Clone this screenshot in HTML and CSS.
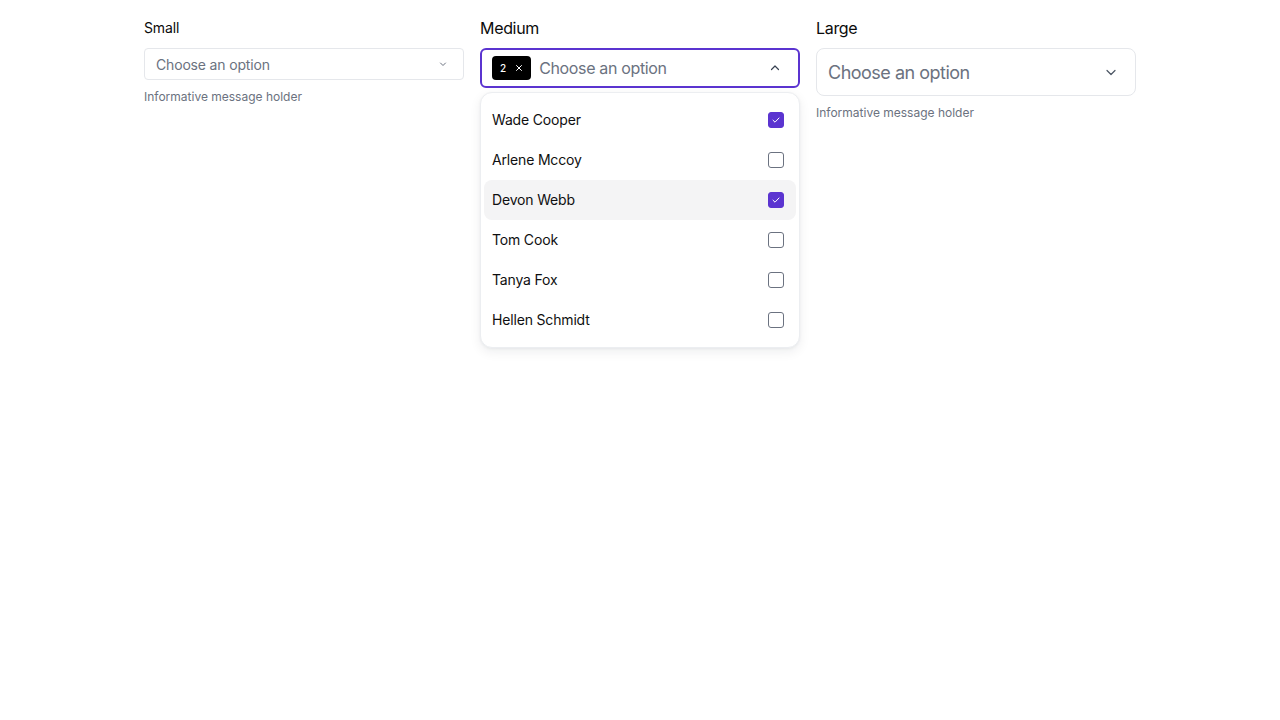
FILE: index.html
```html
<!DOCTYPE html>
<html lang="en">
<head>
<meta charset="utf-8">
<title>Select sizes</title>
<link rel="stylesheet" href="styles.css">
</head>
<body>
<main class="row">
  <div class="field field-sm">
    <label class="label">Small</label>
    <div class="select">
      <span class="placeholder">Choose an option</span>
      <svg class="chev" width="10" height="10" viewBox="0 0 10 10"><path d="M2.5 4l2.5 2.5L7.5 4" fill="none" stroke="#6b7280" stroke-width="1" stroke-linecap="round" stroke-linejoin="round"/></svg>
    </div>
    <p class="help">Informative message holder</p>
  </div>

  <div class="field field-md">
    <label class="label">Medium</label>
    <div class="select open">
      <span class="badge">2<svg width="8" height="8" viewBox="0 0 8 8"><path d="M1.5 1.5l5 5M6.5 1.5l-5 5" stroke="#fff" stroke-width="1" stroke-linecap="round"/></svg></span>
      <span class="placeholder">Choose an option</span>
      <svg class="chev" width="12" height="12" viewBox="0 0 12 12"><path d="M2.5 7.5L6 4l3.5 3.5" fill="none" stroke="#374151" stroke-width="1.2" stroke-linecap="round" stroke-linejoin="round"/></svg>
    </div>
    <ul class="menu">
      <li class="opt"><span class="name">Wade Cooper</span><span class="cb on"><svg width="10" height="10" viewBox="0 0 10 10"><path d="M2 5.2l2 2L8 3" fill="none" stroke="#fff" stroke-width="1" stroke-linecap="round" stroke-linejoin="round"/></svg></span></li>
      <li class="opt"><span class="name">Arlene Mccoy</span><span class="cb"></span></li>
      <li class="opt hover"><span class="name">Devon Webb</span><span class="cb on"><svg width="10" height="10" viewBox="0 0 10 10"><path d="M2 5.2l2 2L8 3" fill="none" stroke="#fff" stroke-width="1" stroke-linecap="round" stroke-linejoin="round"/></svg></span></li>
      <li class="opt"><span class="name">Tom Cook</span><span class="cb"></span></li>
      <li class="opt"><span class="name">Tanya Fox</span><span class="cb"></span></li>
      <li class="opt"><span class="name">Hellen Schmidt</span><span class="cb"></span></li>
    </ul>
  </div>

  <div class="field field-lg">
    <label class="label">Large</label>
    <div class="select">
      <span class="placeholder">Choose an option</span>
      <svg class="chev" width="14" height="14" viewBox="0 0 14 14"><path d="M3 5.5l4 4 4-4" fill="none" stroke="#4b5563" stroke-width="1.2" stroke-linecap="round" stroke-linejoin="round"/></svg>
    </div>
    <p class="help">Informative message holder</p>
  </div>
</main>
</body>
</html>
```

FILE: styles.css
```css
* { box-sizing: border-box; }
html, body { min-height: 720px; }
body {
  margin: 0;
  background: #fff;
  font-family: Inter, "Noto Sans", "Liberation Sans", sans-serif;
  color: #111827;
}
.row {
  display: flex;
  justify-content: center;
  gap: 16px;
  padding-top: 18px;
}
.field {
  width: 320px;
  display: flex;
  flex-direction: column;
  position: relative;
}
.label {
  display: block;
  color: #0b0b0b;
  font-size: 16px;
  line-height: 20px;
  margin-bottom: 10px;
  letter-spacing: -0.02em;
}
.field-sm .label { font-size: 14px; letter-spacing: -0.01em; }
.select {
  display: flex;
  align-items: center;
  border: 1px solid #e5e7eb;
  background: #fff;
}
.placeholder { color: #6b7280; flex: 1; }
.field-sm .select {
  height: 32px;
  border-radius: 4px;
  padding: 0 15px 0 11px;
  font-size: 14px;
  letter-spacing: -0.012em;
}
.field-md .select {
  height: 40px;
  border-radius: 6px;
  border: 2px solid #5b34d0;
  padding: 0 17px 0 10px;
  font-size: 16px;
  letter-spacing: -0.022em;
}
.field-lg .select {
  height: 48px;
  border-radius: 8px;
  padding: 0 17px 0 11px;
  font-size: 18px;
  letter-spacing: -0.028em;
}
.chev { display: block; flex: none; }
.help {
  margin: 9px 0 0;
  font-size: 12px;
  line-height: 16px;
  color: #6b7280;
}
.badge {
  display: inline-flex;
  align-items: center;
  gap: 9px;
  height: 24px;
  padding: 0 8px 0 8px;
  margin-right: 8px;
  background: #000;
  color: #fff;
  border-radius: 4px;
  font-size: 10px;
  font-weight: 500;
  letter-spacing: 0;
}
.badge svg { display: block; }
.menu {
  position: absolute;
  top: 74px;
  left: 0;
  width: 320px;
  margin: 0;
  list-style: none;
  padding: 7px 3px;
  background: #fff;
  border: 1px solid #eceef1;
  border-radius: 12px;
  box-shadow: 0 4px 12px rgba(17, 24, 39, 0.07), 0 1px 3px rgba(17, 24, 39, 0.05);
}
.opt {
  display: flex;
  align-items: center;
  justify-content: space-between;
  height: 40px;
  padding: 0 12px 0 8px;
  font-size: 14px;
  letter-spacing: -0.012em;
  color: #0f0f10;
  border-radius: 8px;
}
.name { margin-bottom: 2px; }
.opt.hover { background: #f4f4f5; }
.cb {
  width: 16px;
  height: 16px;
  border: 1px solid #6b7280;
  border-radius: 3px;
  display: flex;
  align-items: center;
  justify-content: center;
  background: #fff;
}
.cb.on { background: #5b34d0; border-color: #5b34d0; }
.cb svg { display: block; }
```
